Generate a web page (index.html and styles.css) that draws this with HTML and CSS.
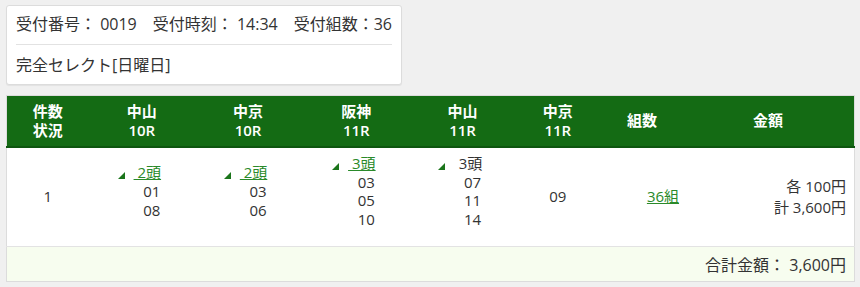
FILE: index.html
```html
<!DOCTYPE html>
<html lang="ja">
<head>
  <meta charset="UTF-8"/>
  <meta name="viewport" content="width=device-width,initial-scale=1.0"/>
  <title>投票内容</title>
  <link rel="stylesheet" href="styles.css">
</head>
<body>

<div class="receipt">
  <p class="receipt-meta">受付番号： 0019　受付時刻： 14:34　受付組数：36</p>
  <p class="receipt-type">完全セレクト[日曜日]</p>
</div>

<table class="bet-table">
  <colgroup>
    <col style="width: 82px">
    <col style="width: 106px">
    <col style="width: 106px">
    <col style="width: 110px">
    <col style="width: 102px">
    <col style="width: 88px">
    <col style="width: 80px">
    <col style="width: 172px">
  </colgroup>
  <thead>
    <tr>
      <th>件数<br>状況</th>
      <th>中山<br>10R</th>
      <th>中京<br>10R</th>
      <th>阪神<br>11R</th>
      <th>中山<br>11R</th>
      <th>中京<br>11R</th>
      <th>組数</th>
      <th>金額</th>
    </tr>
  </thead>
  <tbody>
    <tr>
      <td>1</td>
      <td class="horses">
        <div class="horses-head"><span class="tri"></span><a href="#">&nbsp;2頭</a></div>
        <div>01</div>
        <div>08</div>
      </td>
      <td class="horses">
        <div class="horses-head"><span class="tri"></span><a href="#">&nbsp;2頭</a></div>
        <div>03</div>
        <div>06</div>
      </td>
      <td class="horses">
        <div class="horses-head"><span class="tri"></span><a href="#">&nbsp;3頭</a></div>
        <div>03</div>
        <div>05</div>
        <div>10</div>
      </td>
      <td class="horses">
        <div class="horses-head"><span class="tri"></span><span class="count">3頭</span></div>
        <div>07</div>
        <div>11</div>
        <div>14</div>
      </td>
      <td>09</td>
      <td class="combos"><a href="#">36組</a></td>
      <td class="amount">
        <div>各 100円</div>
        <div>計 3,600円</div>
      </td>
    </tr>
  </tbody>
  <tfoot>
    <tr>
      <td colspan="8">合計金額： 3,600円</td>
    </tr>
  </tfoot>
</table>

</body>
</html>
```

FILE: styles.css
```css
* {
  margin: 0;
  padding: 0;
  box-sizing: border-box;
}

body {
  font-family: "Open Sans", "Noto Sans CJK JP", sans-serif;
  font-size: 16px;
  color: #333;
  background: #f0f0f0;
  padding: 5px 6px;
}

a {
  color: #2a8a2a;
  text-decoration: underline;
}

.receipt {
  width: fit-content;
  background: #fff;
  border: 1px solid #dcdcdc;
  border-radius: 3px;
  box-shadow: 0 1px 1px rgba(0, 0, 0, 0.06);
  padding: 8px 9px 9px 9px;
  margin-bottom: 10px;
}

.receipt p {
  line-height: 20px;
}

.receipt-meta {
  padding-bottom: 10px;
  border-bottom: 1px solid #e2e2e2;
  margin-bottom: 10px;
}

.bet-table {
  width: 849px;
  table-layout: fixed;
  border-collapse: collapse;
  border: 1px solid #dcdcdc;
  background: #fff;
  font-size: 15px;
}

.bet-table th {
  height: 51px;
  background: #146b14;
  border-bottom: 2px solid #0e560f;
  color: #fff;
  font-weight: 600;
  line-height: 19px;
  text-align: center;
  vertical-align: middle;
}

.bet-table tbody td {
  height: 100px;
  text-align: center;
  vertical-align: middle;
  line-height: 18.7px;
  border-bottom: 1px solid #e3e3e3;
}

.bet-table td.horses {
  padding: 0 0 11px 20px;
}

.horses-head {
  margin-left: -25px;
}

/* small corner marker in front of the horse count */
.tri {
  display: inline-block;
  width: 0;
  height: 0;
  border-left: 7px solid transparent;
  border-bottom: 7px solid #1b751b;
  margin-right: 9px;
  vertical-align: -1px;
}

.horses-head .count {
  padding-left: 5px;
}

.bet-table td.combos {
  padding-left: 42px;
}

.bet-table td.amount {
  text-align: right;
  padding-right: 8px;
  line-height: 21px;
}

.bet-table tfoot td {
  height: 35px;
  background: #f7fdef;
  font-size: 16px;
  text-align: right;
  padding-right: 8px;
  vertical-align: middle;
}
```
